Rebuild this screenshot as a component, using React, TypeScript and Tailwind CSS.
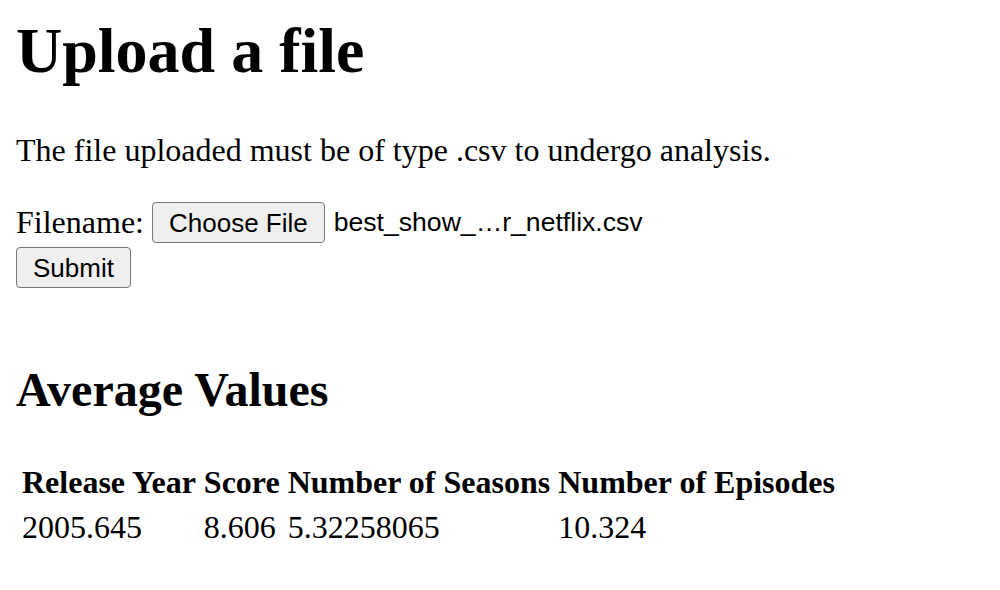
export default function App() {
  const serif = { fontFamily: '"Liberation Serif", "Times New Roman", serif' };
  const sans = { fontFamily: '"Liberation Sans", Arial, sans-serif' };
  return (
    <div className="min-h-[590px] bg-white px-4 text-black" style={serif}>
      <h1 className="pt-[14px] text-[64px] font-bold leading-[74px]">Upload a file</h1>
      <p className="mt-[44px] text-[32px] leading-[37px]">
        The file uploaded must be of type .csv to undergo analysis.
      </p>
      <form className="mt-[33px]">
        <div className="flex items-center text-[32px] leading-[37px]">
          <span>Filename:</span>
          <button
            type="button"
            className="ml-[8px] h-[41px] rounded-[4px] border border-[#767676] bg-[#efefef] px-[16px] text-[26px] leading-none text-black"
            style={sans}
          >
            Choose File
          </button>
          <span className="ml-[9px] text-[26.6px]" style={sans}>
            best_show_…r_netflix.csv
          </span>
        </div>
        <button
          type="submit"
          className="mt-[4px] h-[41px] rounded-[4px] border border-[#767676] bg-[#efefef] px-[16px] text-[26px] leading-none text-black"
          style={sans}
        >
          Submit
        </button>
      </form>
      <h2 className="mt-[74px] text-[48px] font-bold leading-[55px]">Average Values</h2>
      <table className="mt-[41px] border-separate border-spacing-[4px] text-[32px] leading-[37px]">
        <thead>
          <tr>
            <th className="p-[2px] text-left font-bold">Release Year</th>
            <th className="p-[2px] text-left font-bold">Score</th>
            <th className="p-[2px] text-left font-bold">Number of Seasons</th>
            <th className="p-[2px] text-left font-bold">Number of Episodes</th>
          </tr>
        </thead>
        <tbody>
          <tr>
            <td className="p-[2px]">2005.645</td>
            <td className="p-[2px]">8.606</td>
            <td className="p-[2px]">5.32258065</td>
            <td className="p-[2px]">10.324</td>
          </tr>
        </tbody>
      </table>
    </div>
  );
}
